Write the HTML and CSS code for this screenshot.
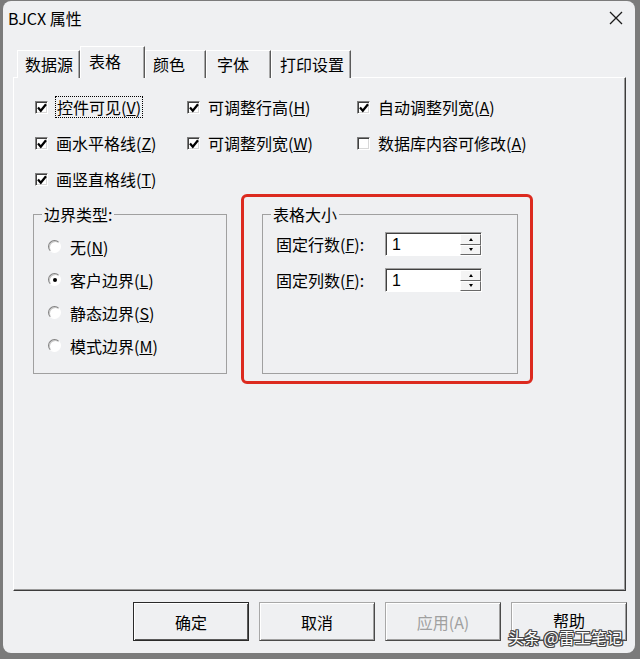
FILE: index.html
```html
<!DOCTYPE html>
<html lang="zh-CN">
<head>
<meta charset="utf-8">
<title>BJCX 属性</title>
<link rel="stylesheet" href="styles.css">
</head>
<body>
<div class="window">
  <div class="titlebar">
    <span class="title">BJCX 属性</span>
    <svg class="close" width="14" height="14" viewBox="0 0 14 14"><path d="M1 1 L13 13 M13 1 L1 13" stroke="#1a1a1a" stroke-width="1.3" fill="none"/></svg>
  </div>
  <div class="tabs">
    <div class="tab w-src">数据源</div>
    <div class="tab active w-tbl">表格</div>
    <div class="tab w-clr">颜色</div>
    <div class="tab w-fnt">字体</div>
    <div class="tab w-prn">打印设置</div>
  </div>
  <div class="panel">
    <div class="checks">
      <label class="chk"><span class="box"><svg width="10" height="10" viewBox="0 0 10 10"><path d="M1 4.5 L3.8 7.8 L9 1.2" stroke="#000" stroke-width="2.2" fill="none"/></svg></span><span class="lbl focus">控件可见(<u>V</u>)</span></label>
      <label class="chk"><span class="box"><svg width="10" height="10" viewBox="0 0 10 10"><path d="M1 4.5 L3.8 7.8 L9 1.2" stroke="#000" stroke-width="2.2" fill="none"/></svg></span><span class="lbl">可调整行高(<u>H</u>)</span></label>
      <label class="chk"><span class="box"><svg width="10" height="10" viewBox="0 0 10 10"><path d="M1 4.5 L3.8 7.8 L9 1.2" stroke="#000" stroke-width="2.2" fill="none"/></svg></span><span class="lbl">自动调整列宽(<u>A</u>)</span></label>
      <label class="chk"><span class="box"><svg width="10" height="10" viewBox="0 0 10 10"><path d="M1 4.5 L3.8 7.8 L9 1.2" stroke="#000" stroke-width="2.2" fill="none"/></svg></span><span class="lbl">画水平格线(<u>Z</u>)</span></label>
      <label class="chk"><span class="box"><svg width="10" height="10" viewBox="0 0 10 10"><path d="M1 4.5 L3.8 7.8 L9 1.2" stroke="#000" stroke-width="2.2" fill="none"/></svg></span><span class="lbl">可调整列宽(<u>W</u>)</span></label>
      <label class="chk"><span class="box"></span><span class="lbl">数据库内容可修改(<u>A</u>)</span></label>
      <label class="chk"><span class="box"><svg width="10" height="10" viewBox="0 0 10 10"><path d="M1 4.5 L3.8 7.8 L9 1.2" stroke="#000" stroke-width="2.2" fill="none"/></svg></span><span class="lbl">画竖直格线(<u>T</u>)</span></label>
    </div>
    <div class="groups">
      <fieldset class="group g-border">
        <legend>边界类型:</legend>
        <div class="radios">
          <label class="rad"><span class="circle"></span><span class="lbl">无(<u>N</u>)</span></label>
          <label class="rad"><span class="circle on"></span><span class="lbl">客户边界(<u>L</u>)</span></label>
          <label class="rad"><span class="circle"></span><span class="lbl">静态边界(<u>S</u>)</span></label>
          <label class="rad"><span class="circle"></span><span class="lbl">模式边界(<u>M</u>)</span></label>
        </div>
      </fieldset>
      <div class="highlight">
        <fieldset class="group g-size">
          <legend>表格大小</legend>
          <div class="spinrow">
            <span class="spinlbl">固定行数(<u>F</u>):</span>
            <div class="spin"><span class="val">1</span><span class="arrows"><span class="sb"><i class="up"></i></span><span class="sb"><i class="down"></i></span></span></div>
          </div>
          <div class="spinrow">
            <span class="spinlbl">固定列数(<u>F</u>):</span>
            <div class="spin"><span class="val">1</span><span class="arrows"><span class="sb"><i class="up"></i></span><span class="sb"><i class="down"></i></span></span></div>
          </div>
        </fieldset>
      </div>
    </div>
  </div>
  <div class="buttons">
    <div class="btn default">确定</div>
    <div class="btn">取消</div>
    <div class="btn disabled">应用(<u>A</u>)</div>
    <div class="btn help">帮助</div>
  </div>
  <div class="watermark">头条 @雷工笔记</div>
</div>
</body>
</html>
```

FILE: styles.css
```css
* { box-sizing: border-box; }

html, body {
  margin: 0;
  padding: 0;
}

body {
  background: #7b7b7b;
  width: 640px;
  height: 659px;
  overflow: hidden;
  font-family: "Noto Sans CJK SC", "Noto Sans", sans-serif;
  font-size: 16px;
  color: #000;
}

.window {
  position: relative;
  margin: 1px 0 0 3px;
  width: 632px;
  height: 652px;
  background: #eff0f2;
  border-radius: 8px;
}

.titlebar {
  height: 33px;
  display: flex;
  align-items: center;
  justify-content: space-between;
  padding: 0 12px 0 5px;
}

.title {
  font-size: 16px;
  line-height: 20px;
}

.close { display: block; }

.tabs {
  margin-top: 13px;
  height: 31px;
  display: flex;
  align-items: flex-end;
  padding-left: 14px;
  position: relative;
  z-index: 1;
  margin-bottom: -1px;
}

.tab {
  height: 28px;
  line-height: 26px;
  padding-left: 7px;
  border-top: 1px solid #fff;
  border-left: 1px solid #fff;
  border-right: 1px solid #5a5a5a;
  box-shadow: inset -1px 0 0 #a8a8a8;
  background: #eff0f2;
  white-space: nowrap;
}

.tab.active {
  height: 32px;
  line-height: 28px;
  padding-left: 8px;
}

.w-src { width: 63px; }
.w-tbl { width: 65px; }
.w-clr { width: 61px; }
.w-fnt { width: 65px; padding-left: 10px; }
.w-prn { width: 80px; padding-left: 8px; }

.panel {
  margin-left: 10px;
  width: 613px;
  height: 514px;
  border-top: 1px solid #fff;
  border-left: 1px solid #fff;
  border-right: 1px solid #3c3c3c;
  border-bottom: 1px solid #3c3c3c;
  box-shadow: inset -1px -1px 0 #9a9a9a;
  background: #eff0f2;
}

.checks {
  display: grid;
  grid-template-columns: 152px 170px auto;
  grid-auto-rows: 36px;
  padding: 11px 0 0 21px;
}

.chk {
  display: flex;
  align-items: center;
}

.box {
  width: 13px;
  height: 13px;
  flex: none;
  background: #fff;
  border: 1px solid;
  border-color: #808080 #fff #fff #808080;
  box-shadow: inset 1px 1px 0 #404040, inset -1px -1px 0 #d8d8d8;
  display: flex;
  align-items: center;
  justify-content: center;
  margin-right: 8px;
}

.box svg { display: block; margin: 1px 0 0 1px; }

.lbl {
  line-height: 20px;
  white-space: nowrap;
}

.lbl.focus {
  outline: 1px dotted #000;
  outline-offset: 0;
  padding: 0 1px;
}

.groups {
  display: flex;
  align-items: flex-start;
  margin-top: -3px;
  padding-left: 19px;
  gap: 14px;
}

.group {
  margin: 0;
  padding: 0 8px 10px 8px;
  border: 1px solid #a0a0a0;
  min-inline-size: 0;
}

.group legend {
  padding: 0 2px;
  line-height: 22px;
  font-size: 16px;
}

.g-border {
  width: 194px;
  height: 171px;
  margin-top: 9px;
}

.radios {
  margin-left: 6px;
  padding-top: 5px;
}

.rad {
  display: flex;
  align-items: center;
  height: 33px;
}

.circle {
  width: 13px;
  height: 13px;
  flex: none;
  border-radius: 50%;
  border: 1px solid;
  border-color: #808080 #fff #fff #808080;
  background: #fff;
  box-shadow: inset 1px 1px 0 #c8c8c8;
  margin-right: 9px;
  display: flex;
  align-items: center;
  justify-content: center;
}

.circle.on::after {
  content: "";
  width: 4px;
  height: 4px;
  border-radius: 50%;
  background: #000;
}

.highlight {
  width: 292px;
  height: 190px;
  border: 3px solid #dc2a1f;
  border-radius: 6px;
  padding: 6px 0 0 18px;
}

.g-size {
  width: 256px;
  height: 171px;
}

.spinrow {
  display: flex;
  align-items: center;
  height: 24px;
  margin-left: 5px;
}

.spinrow:first-of-type { margin-top: 7px; }
.spinrow + .spinrow { margin-top: 12px; }

.spinlbl {
  width: 109px;
  line-height: 20px;
  white-space: nowrap;
}

.spin {
  width: 97px;
  height: 24px;
  display: flex;
  background: #fff;
  border: 1px solid;
  border-color: #a0a0a0 #fff #fff #a0a0a0;
  box-shadow: inset 1px 1px 0 #404040;
}

.val {
  flex: 1;
  padding: 1px 0 0 6px;
  line-height: 21px;
  font-family: "Liberation Sans", "Noto Sans", sans-serif;
  font-size: 16px;
}

.arrows {
  width: 21px;
  display: flex;
  flex-direction: column;
  padding-top: 1px;
}

.sb {
  flex: 1;
  background: #f4f4f4;
  border-top: 1px solid #fff;
  border-left: 1px solid #fff;
  border-right: 1px solid #696969;
  border-bottom: 1px solid #696969;
  display: flex;
  align-items: center;
  justify-content: center;
}

.sb i {
  width: 0;
  height: 0;
  border-left: 2.5px solid transparent;
  border-right: 2.5px solid transparent;
}

.sb i.up { border-bottom: 3px solid #000; }
.sb i.down { border-top: 3px solid #000; }

.buttons {
  display: flex;
  justify-content: flex-end;
  gap: 10px;
  padding-right: 8px;
  margin-top: 11px;
}

.btn {
  width: 116px;
  height: 39px;
  display: flex;
  align-items: center;
  justify-content: center;
  background: #eff0f2;
  border: 1px solid;
  border-color: #a8a8a8 #4a4a4a #4a4a4a #a8a8a8;
  box-shadow: inset 1px 1px 0 #fff, inset -1px -1px 0 #a0a0a0;
  line-height: 20px;
}

.btn.default {
  border-color: #2a2a2a;
  box-shadow: inset 1px 1px 0 #fff, inset -1px -1px 0 #5a5a5a;
}

.btn.disabled {
  color: #a0a0a0;
}

.btn.disabled u { text-decoration: none; }

.btn.help {
  align-items: flex-start;
  padding-top: 7px;
}

.watermark {
  position: absolute;
  left: 505px;
  top: 627px;
  font-size: 16px;
  line-height: 18px;
  color: #fff;
  white-space: nowrap;
  text-shadow: 1px 0 0 #444, -1px 0 0 #444, 0 1px 0 #444, 0 -1px 0 #444, 1px 1px 0 #444, -1px -1px 0 #444, 1px -1px 0 #444, -1px 1px 0 #444;
}
```
